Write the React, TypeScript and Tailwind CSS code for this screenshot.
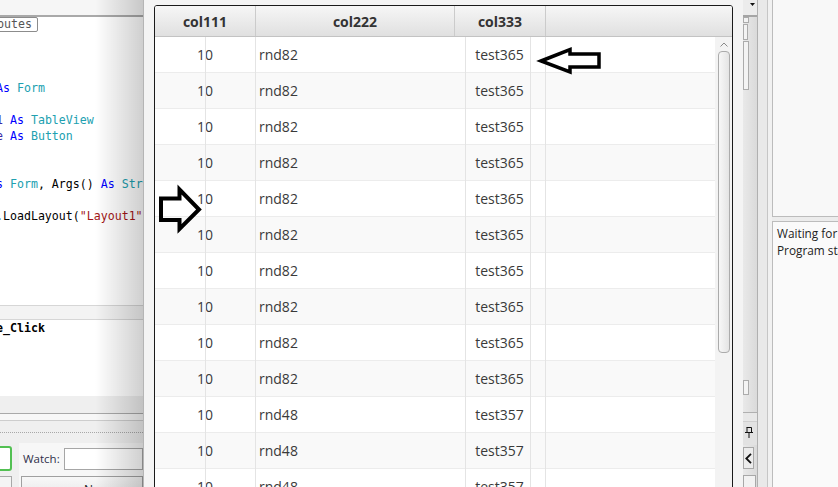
import React from "react";

type Tok = [string, string];
const K = "text-[#0000ff]";
const T = "text-[#20a0b0]";
const D = "text-[#000000]";
const V = "text-[#3a2aa8]";
const S = "text-[#a31515]";

const codeLines: Tok[][] = [
  [],
  [],
  [],
  [["As", K], [" Form", T]],
  [],
  [["1", V], [" ", D], ["As", K], [" TableView", T]],
  [["e", V], [" ", D], ["As", K], [" Button", T]],
  [],
  [],
  [["s", K], [" Form", T], [", Args() ", D], ["As", K], [" String)", T]],
  [],
  [[".LoadLayout(", D], ['"Layout1")', S]],
];

const rows: [string, string, string][] = [
  ...Array.from({ length: 10 }, () => ["10", "rnd82", "test365"] as [string, string, string]),
  ...Array.from({ length: 3 }, () => ["10", "rnd48", "test357"] as [string, string, string]),
];

export default function App() {
  return (
    <div className="relative flex w-[838px] h-[487px] overflow-hidden bg-[#f0f0f0] font-['Open_Sans',sans-serif]">
      {/* Left IDE editor */}
      <div className="relative w-[143px] shrink-0 flex flex-col bg-white overflow-hidden">
        <div className="h-[17px] shrink-0 bg-[#f6f6f6] border-b-2 border-[#a9a9a9]" />
        <div className="h-[288px] shrink-0 bg-white font-['DejaVu_Sans_Mono',monospace] text-[11.6px] leading-[16px] whitespace-pre">
          <div className="flex">
            <div className="ml-[-6px] h-[15px] border border-[#8c8c8c] rounded-[2px] pl-[2px] pr-[5px] leading-[13px] text-[#555]">
              butes
            </div>
          </div>
          {codeLines.map((line, i) => (
            <div key={i} className="h-[16px] ml-[-4px]">
              {line.map(([t, c], j) => (
                <span key={j} className={c}>
                  {t}
                </span>
              ))}
            </div>
          ))}
        </div>
        <div className="h-[15px] shrink-0 bg-[#f3f3f3] border-y border-[#d6d6d6]" />
        <div className="h-[76px] shrink-0 bg-white font-['DejaVu_Sans_Mono',monospace] text-[11.6px] leading-[16px] font-bold text-black whitespace-pre">
          <div className="ml-[-4px]">e_Click</div>
        </div>
        <div className="h-[18px] shrink-0 bg-[#efefef] border-b border-[#a9a9a9]" />
        <div className="h-[7px] shrink-0 bg-[#f7f7f7] border-b border-[#cdcdcd]" />
        <div className="h-[22px] shrink-0 bg-[#efefef] pt-[11px]">
          <div className="border-t border-dotted border-[#a8a8a8]" />
        </div>
        <div className="flex-1 flex bg-[#efefef]">
          <div className="w-[19px] shrink-0 flex flex-col">
            <div className="ml-[-10px] mt-[3px] w-[22px] h-[25px] border-2 border-[#52c052] rounded-[3px] bg-white" />
            <div className="ml-[-10px] mt-[5px] w-[22px] h-[20px] border border-[#a8a8a8] bg-[#f4f4f4]" />
          </div>
          <div className="flex-1 bg-[#f7f7f7] pl-[4px] pt-[5px] flex flex-col">
            <div className="flex items-center h-[22px]">
              <div className="w-[41px] text-[11.5px] text-[#2f2f4a]">Watch:</div>
              <div className="flex-1 h-[22px] border border-[#a6a6a6] bg-white" />
            </div>
            <div className="mt-[6px] ml-[-2px] h-[24px] border border-[#a0a0a0] bg-linear-to-b from-[#f8f8f8] to-[#e6e6e6] pl-[62px] pt-[5px] text-[12px] leading-[16px] text-[#222]">
              Name
            </div>
          </div>
        </div>
        <div className="pointer-events-none absolute top-0 right-0 bottom-0 w-[48px] bg-linear-to-r from-transparent to-[rgba(0,0,0,0.19)]" />
      </div>

      {/* Popup window with table */}
      <div className="w-[600px] shrink-0 flex flex-col bg-[#f4f4f4] border-l border-[#b5b5b5] pt-[5px] pl-[10px] pr-[10px]">
        <div className="h-[520px] shrink-0 flex flex-col bg-white border border-[#1a1a1a] rounded-t-[3px] overflow-hidden">
          <div className="h-[31px] shrink-0 flex border-b border-[#c3c3c3] bg-linear-to-b from-[#f6f6f6] to-[#e0e0e0] text-[14px] font-bold text-[#333]">
            <div className="w-[101px] border-r border-[#cbcbcb] flex items-center justify-center">col111</div>
            <div className="w-[199px] border-r border-[#cbcbcb] flex items-center justify-center">col222</div>
            <div className="w-[91px] border-r border-[#cbcbcb] flex items-center justify-center">col333</div>
            <div className="flex-1" />
          </div>
          <div className="flex-1 flex min-h-0">
            <div className="relative flex-1">
              {rows.map((r, i) => (
                <div
                  key={i}
                  className={`h-[36px] flex pb-[1px] border-b border-[#ececec] text-[14px] text-[#3a3a3a] ${
                    i % 2 === 1 ? "bg-[#f9f9f9]" : "bg-white"
                  }`}
                >
                  <div className="w-[100px] flex items-center justify-center">{r[0]}</div>
                  <div className="w-[199px] flex items-center pl-[4px]">{r[1]}</div>
                  <div className="w-[91px] flex items-center justify-center">{r[2]}</div>
                </div>
              ))}
              <div className="pointer-events-none absolute inset-0 flex">
                <div className="w-[51px] border-r border-[#e4e4e4]" />
                <div className="w-[50px] border-r border-[#e4e4e4]" />
                <div className="w-[210px] border-r border-[#e4e4e4]" />
                <div className="w-[65px] border-r border-[#e4e4e4]" />
                <div className="w-[15px] border-r border-[#e4e4e4]" />
              </div>
            </div>
            <div className="w-[17px] shrink-0 bg-[#f3f3f3] flex flex-col items-center">
              <div className="h-[14px] flex items-center justify-center">
                <svg width="8" height="5" viewBox="0 0 8 5">
                  <path d="M0.5 4.5 L4 1 L7.5 4.5" fill="none" stroke="#8a8a8a" strokeWidth="1" />
                </svg>
              </div>
              <div className="w-[12px] h-[302px] rounded-[4px] border border-[#ababab] bg-linear-to-r from-[#f7f7f7] to-[#e4e4e4]" />
            </div>
          </div>
        </div>
      </div>

      {/* Right IDE strip */}
      <div className="flex-1 flex">
        <div className="w-[15px] shrink-0 flex flex-col bg-linear-to-r from-[#e9e9e9] to-[#dadada] border-r border-[#b0b0b0]">
          <div className="h-[17px] shrink-0 border-b-2 border-[#a5a5a5] bg-[#ececec] flex justify-end pr-[2px] pt-[3px]">
            <svg width="5" height="3" viewBox="0 0 5 3">
              <path d="M0 0 H5 L2.5 3 Z" fill="#111" />
            </svg>
          </div>
          <div className="h-[396px] shrink-0 border-b border-[#b0b0b0] flex flex-col">
            <div className="w-[6px] h-[6px] border border-[#ababab] bg-[#f3f3f3]" />
            <div className="mt-[1px] w-[5px] h-[16px] border border-[#ababab] bg-[#f3f3f3]" />
            <div className="mt-[1px] w-[6px] h-[49px] border border-[#ababab] bg-[#f3f3f3]" />
            <div className="mt-[290px] w-[6px] h-[15px] border border-[#ababab] bg-[#f3f3f3]" />
          </div>
          <div className="h-[8px] shrink-0 bg-[#e8e8e8]" />
          <div className="h-[24px] shrink-0 bg-[#e2e2e2] border-t border-[#cfcfcf] pl-[2px] pt-[5px]">
            <svg width="8" height="11" viewBox="0 0 8 11">
              <path d="M1.5 0.5 H6.5 V5.5 M2 0.5 V5.5 M0 5.5 H8 M4 5.5 V11" fill="none" stroke="#111" strokeWidth="1" />
            </svg>
          </div>
          <div className="mt-[2px] w-[11px] h-[22px] shrink-0 border border-[#a8a8a8] bg-[#ececec] flex items-center pl-[1px]">
            <svg width="7" height="11" viewBox="0 0 7 11">
              <path d="M6 0.8 L1.3 5.5 L6 10.2" fill="none" stroke="#111" strokeWidth="1.8" />
            </svg>
          </div>
          <div className="mt-[6px] w-[13px] h-[20px] shrink-0 border border-[#a8a8a8] bg-[#f2f2f2]" />
        </div>
        <div className="w-[9px] shrink-0 bg-[#e9e9e9]" />
        <div className="w-[5px] shrink-0 border-l border-[#c6c6c6] bg-[#f1f1f1]" />
        <div className="flex-1 flex flex-col min-w-0">
          <div className="h-[217px] shrink-0 border-l border-b border-[#bcbcbc] bg-[#f8f8f8]" />
          <div className="h-[4px] shrink-0 bg-[#ececec]" />
          <div className="flex-1 border-l border-t border-[#bcbcbc] bg-[#fafafa] pl-[4px] pt-[3px] text-[11.8px] leading-[17px] text-[#222] whitespace-nowrap overflow-hidden">
            <div>Waiting for connections</div>
            <div>Program started.</div>
          </div>
        </div>
      </div>

      {/* Annotation arrows */}
      <svg className="pointer-events-none absolute left-0 top-0" width="838" height="487" viewBox="0 0 838 487">
        <path
          d="M541 61 L570 49.5 L570 54 L599 54 L599 67 L570 67 L570 72 Z"
          fill="none"
          stroke="#000"
          strokeWidth="3.5"
        />
        <path
          d="M161 198.5 L179.5 198.5 L179.5 189.5 L199 209.5 L179.5 229 L179.5 220 L161 220 Z"
          fill="none"
          stroke="#000"
          strokeWidth="4"
        />
      </svg>
    </div>
  );
}
